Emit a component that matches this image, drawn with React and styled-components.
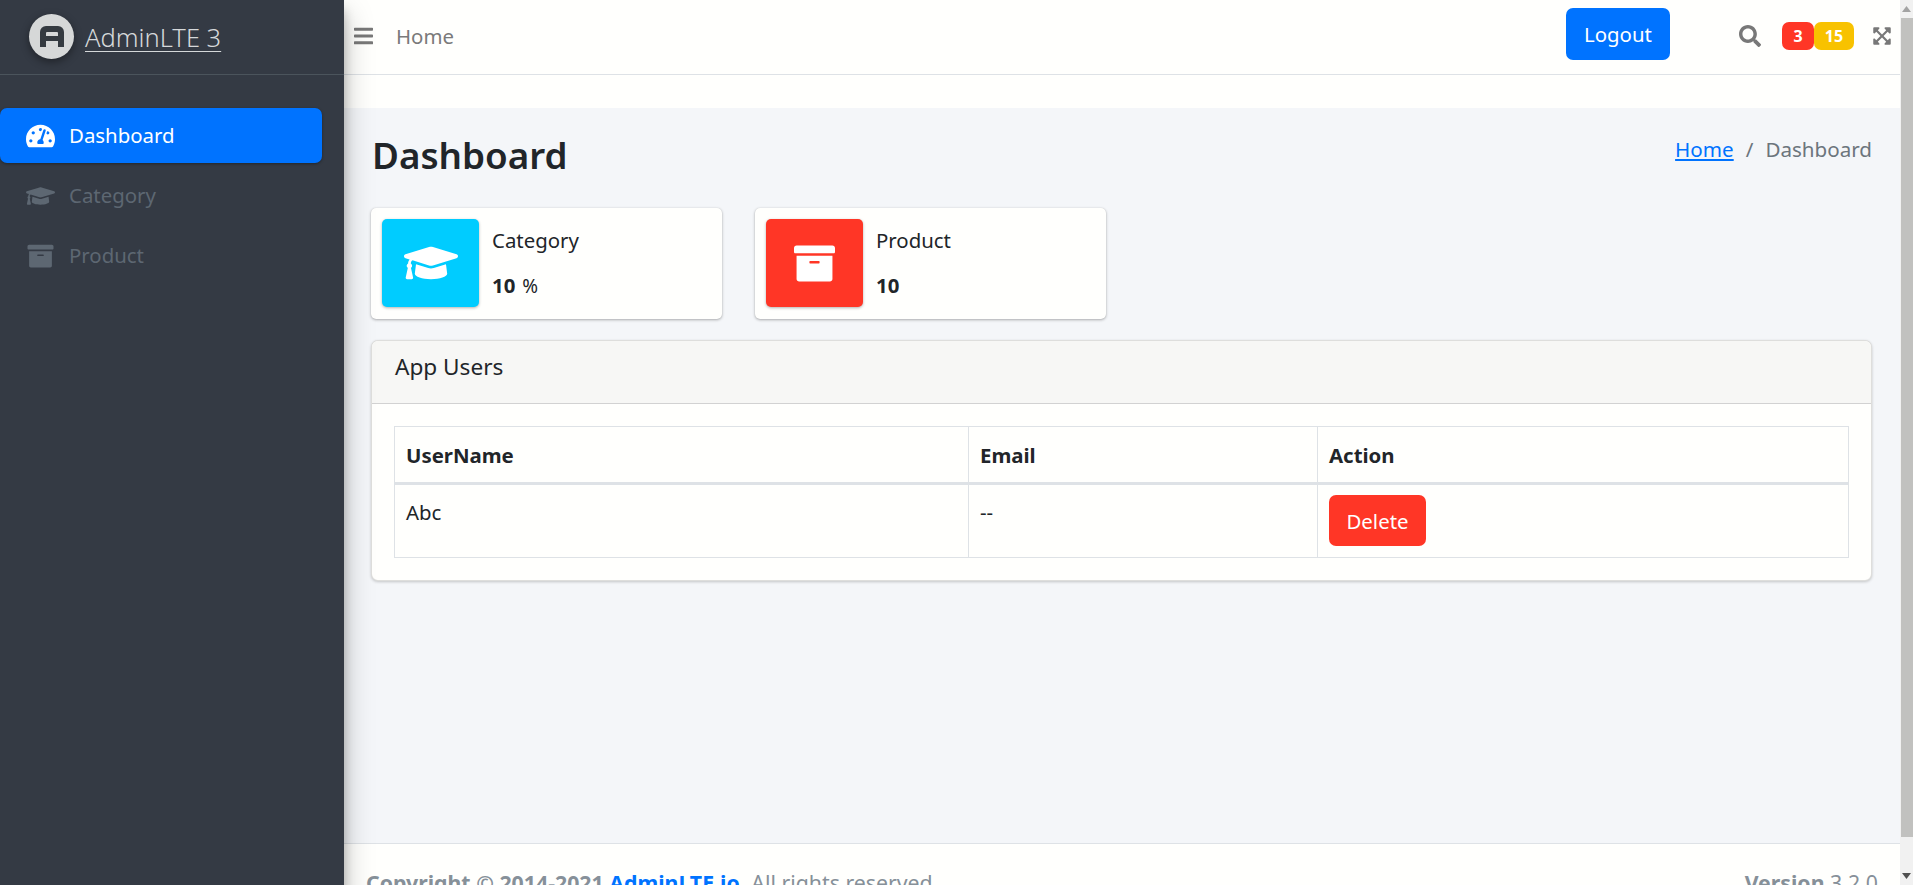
import React from 'react';
import styled, { createGlobalStyle } from 'styled-components';
import { FaTachometerAlt, FaGraduationCap, FaArchive, FaBars, FaSearch, FaExpandArrowsAlt } from 'react-icons/fa';

const Global = createGlobalStyle`
  html, body { margin: 0; padding: 0; height: 100%; overflow: hidden; }
  body { font-family: "Noto Sans", "Open Sans", sans-serif; font-size: 20.4px; color: #212529; background: #fffffd; }
  * { box-sizing: border-box; }
`;

const Viewport = styled.div`
  height: 885px;
  display: grid;
  grid-template-columns: minmax(0, 1fr) 13px;
  overflow: hidden;
`;

const Scrollbar = styled.div`
  height: 885px;
  background: #f1f1f1;
  display: flex;
  flex-direction: column;
  align-items: stretch;
`;

const ScrollArrow = styled.div`
  height: 18px;
  flex: none;
  display: flex;
  align-items: center;
  justify-content: center;
  svg { width: 9px; height: 6px; fill: ${p => p.$color}; }
`;

const ScrollThumb = styled.div`
  flex: 1;
  background: #c1c1bf;
  margin: 0 0 30px 1px;
`;

const Shell = styled.div`
  display: grid;
  grid-template-columns: 344px minmax(0, 1fr);
  height: 917px;
`;

const Sidebar = styled.aside`
  background: #343a44;
  position: relative;
  z-index: 2;
  box-shadow: 0 14px 28px rgba(0, 0, 0, .25), 0 10px 10px rgba(0, 0, 0, .22);
`;

const Brand = styled.a`
  height: 75px;
  display: flex;
  align-items: center;
  gap: 11px;
  padding: 0 0 1px 29px;
  border-bottom: 1px solid #4b545c;
  color: #d5d8da;
  text-decoration: underline;
  text-decoration-thickness: 1px;
  text-underline-offset: 4px;
  white-space: nowrap;
`;

const BrandText = styled.span`
  font-weight: 300;
  font-size: 25.5px;
`;

const LogoWrap = styled.span`
  width: 45px;
  height: 45px;
  border-radius: 50%;
  background: #d6d8d8;
  box-shadow: 0 3px 8px rgba(0, 0, 0, .4);
  display: flex;
  align-items: center;
  justify-content: center;
  flex: none;
`;

const Nav = styled.nav`
  padding: 33px 22px 0 0;
  display: flex;
  flex-direction: column;
  gap: 5px;
`;

const NavItem = styled.a`
  height: 55px;
  display: flex;
  align-items: center;
  padding-left: 26px;
  gap: 14px;
  border-radius: 7px;
  color: ${p => (p.$active ? '#fff' : '#5d6772')};
  background: ${p => (p.$active ? '#0073ff' : 'transparent')};
  box-shadow: ${p => (p.$active ? '0 1px 3px rgba(0,0,0,.35)' : 'none')};
  line-height: 1;
  svg { width: 29px; height: 26px; flex: none; }
`;

const Main = styled.div`
  display: flex;
  flex-direction: column;
  min-width: 0;
`;

const Topbar = styled.header`
  height: 75px;
  flex: none;
  display: flex;
  align-items: center;
  background: #fffffd;
  border-bottom: 1px solid #dee2e6;
  padding: 0 8px 3px 10px;
  color: #787878;
`;

const MenuIcon = styled(FaBars)`
  width: 19px;
  height: 22px;
`;

const HomeLink = styled.a`
  margin-left: 23px;
  color: #7a7a7a;
`;

const LogoutButton = styled.button`
  margin-left: auto;
  width: 104px;
  height: 52px;
  border: 0;
  border-radius: 7px;
  background: #0073ff;
  color: #fff;
  font: inherit;
  margin-right: 69px;
  margin-bottom: 3px;
`;

const SearchIcon = styled(FaSearch)`
  width: 22px;
  height: 22px;
  margin-right: 21px;
`;

const Badge = styled.span`
  height: 28px;
  width: ${p => p.$w}px;
  border-radius: 7px;
  background: ${p => p.$bg};
  color: #fff;
  font-size: 16px;
  font-weight: 700;
  display: flex;
  align-items: center;
  justify-content: center;
`;

const ExpandIcon = styled(FaExpandArrowsAlt)`
  width: 20px;
  height: 20px;
  margin-left: 18px;
`;

const Strip = styled.div`
  height: 33px;
  flex: none;
  background: #fffffd;
`;

const Content = styled.main`
  flex: 1;
  background: #f4f6f9;
  padding: 0 28px 0 27px;
`;

const Header = styled.div`
  height: 100px;
  display: flex;
  justify-content: space-between;
  padding: 20px 0 0 1px;
`;

const Title = styled.h1`
  margin: 0;
  font-size: 36.8px;
  font-weight: 600;
  line-height: 54px;
`;

const Crumbs = styled.div`
  display: flex;
  gap: 11px;
  line-height: 42px;
  color: #6c757d;
  font-size: 20.6px;
`;

const Slash = styled.span`
  padding: 0 1px;
`;

const CrumbLink = styled.a`
  color: #0073ff;
  text-decoration: underline;
`;

const Cards = styled.div`
  display: flex;
  gap: 33px;
`;

const InfoCard = styled.div`
  width: 351px;
  height: 111px;
  background: #fffffd;
  border-radius: 5px;
  box-shadow: 0 0 1px rgba(0, 0, 0, .125), 0 1px 3px rgba(0, 0, 0, .3);
  padding: 11px;
  display: flex;
  gap: 13px;
`;

const IconBox = styled.div`
  width: 97px;
  height: 88px;
  border-radius: 5px;
  background: ${p => p.$bg};
  color: #fff;
  display: flex;
  align-items: center;
  justify-content: center;
  box-shadow: 0 1px 3px rgba(0, 0, 0, .3);
  svg { width: ${p => p.$iw}px; height: ${p => p.$ih}px; }
`;

const InfoBody = styled.div`
  display: flex;
  flex-direction: column;
  padding-top: 5px;
  line-height: 33px;
  gap: 12px;
`;

const InfoValue = styled.div`
  font-weight: 700;
  small { font-size: 19px; font-weight: 400; margin-left: 7px; }
`;

const Panel = styled.section`
  margin-top: 21px;
  background: #fffffd;
  border-radius: 7px;
  border: 1px solid rgba(0, 0, 0, .13);
  box-shadow: 0 1px 3px rgba(0, 0, 0, .2);
  height: 241px;
  overflow: hidden;
`;

const PanelHeader = styled.div`
  height: 63px;
  background: #f7f7f5;
  border-bottom: 1px solid #d2d2d2;
  padding-left: 23px;
  line-height: 52px;
  font-size: 22.6px;
`;

const PanelBody = styled.div`
  padding: 22px 22px 0 22px;
`;

const Table = styled.table`
  width: 100%;
  border-collapse: collapse;
  table-layout: fixed;
  border: 1px solid #dee2e6;
`;

const Th = styled.th`
  width: ${p => p.$w}px;
  height: 57px;
  padding: 0 11px;
  text-align: left;
  font-weight: 700;
  border: 1px solid #dee2e6;
  border-bottom-width: 3px;
`;

const Td = styled.td`
  height: 74px;
  padding: 14px 11px 0;
  vertical-align: top;
  border: 1px solid #dee2e6;
  line-height: 26px;
`;

const ActionCell = styled(Td)`
  padding-top: 10px;
`;

const DeleteButton = styled.button`
  width: 97px;
  height: 51px;
  border: 0;
  border-radius: 7px;
  background: #ff3626;
  color: #fff;
  font: inherit;
`;

const Footer = styled.footer`
  height: 74px;
  flex: none;
  background: #fffffd;
  border-top: 1px solid #dee2e6;
  padding: 24px 22px 0 22px;
  display: flex;
  justify-content: space-between;
  color: #869099;
  white-space: nowrap;
  font-size: 21.3px;
`;

const FooterLink = styled.a`
  color: #0073ff;
  font-weight: 700;
`;

const Logo = () => (
  <svg width="24" height="21" viewBox="0 0 24 21" fill="#343a40" fillRule="evenodd">
    <path d="M0 21V6a6 6 0 0 1 6-6h12a6 6 0 0 1 6 6v15h-6v-6H6v6zM6 10h12V7a1 1 0 0 0-1-1H7a1 1 0 0 0-1 1z" />
  </svg>
);

export default function App() {
  return (
    <>
      <Global />
      <Viewport>
        <Shell>
          <Sidebar>
            <Brand>
              <LogoWrap><Logo /></LogoWrap>
              <BrandText>AdminLTE 3</BrandText>
            </Brand>
            <Nav>
              <NavItem $active><FaTachometerAlt />Dashboard</NavItem>
              <NavItem><FaGraduationCap />Category</NavItem>
              <NavItem><FaArchive />Product</NavItem>
            </Nav>
          </Sidebar>
          <Main>
            <Topbar>
              <MenuIcon />
              <HomeLink>Home</HomeLink>
              <LogoutButton>Logout</LogoutButton>
              <SearchIcon />
              <Badge $w={32} $bg="#ff3626">3</Badge>
              <Badge $w={40} $bg="#f8c200">15</Badge>
              <ExpandIcon />
            </Topbar>
            <Strip />
            <Content>
              <Header>
                <Title>Dashboard</Title>
                <Crumbs>
                  <CrumbLink>Home</CrumbLink>
                  <Slash>/</Slash>
                  <span>Dashboard</span>
                </Crumbs>
              </Header>
              <Cards>
                <InfoCard>
                  <IconBox $bg="#00ccff" $iw={54} $ih={44}><FaGraduationCap /></IconBox>
                  <InfoBody>
                    <div>Category</div>
                    <InfoValue>10<small>%</small></InfoValue>
                  </InfoBody>
                </InfoCard>
                <InfoCard>
                  <IconBox $bg="#ff3626" $iw={41} $ih={41}><FaArchive /></IconBox>
                  <InfoBody>
                    <div>Product</div>
                    <InfoValue>10</InfoValue>
                  </InfoBody>
                </InfoCard>
              </Cards>
              <Panel>
                <PanelHeader>App Users</PanelHeader>
                <PanelBody>
                  <Table>
                    <thead>
                      <tr>
                        <Th $w={574}>UserName</Th>
                        <Th $w={349}>Email</Th>
                        <Th>Action</Th>
                      </tr>
                    </thead>
                    <tbody>
                      <tr>
                        <Td>Abc</Td>
                        <Td>--</Td>
                        <ActionCell><DeleteButton>Delete</DeleteButton></ActionCell>
                      </tr>
                    </tbody>
                  </Table>
                </PanelBody>
              </Panel>
            </Content>
            <Footer>
              <div><strong>Copyright © 2014-2021 <FooterLink>AdminLTE.io</FooterLink>.</strong> All rights reserved.</div>
              <div><strong>Version</strong> 3.2.0</div>
            </Footer>
          </Main>
        </Shell>
        <Scrollbar>
          <ScrollArrow $color="#a3a3a3"><svg viewBox="0 0 9 6"><path d="M4.5 0L9 6H0z" /></svg></ScrollArrow>
          <ScrollThumb />
          <ScrollArrow $color="#505050"><svg viewBox="0 0 9 6"><path d="M0 0h9L4.5 6z" /></svg></ScrollArrow>
        </Scrollbar>
      </Viewport>
    </>
  );
}
